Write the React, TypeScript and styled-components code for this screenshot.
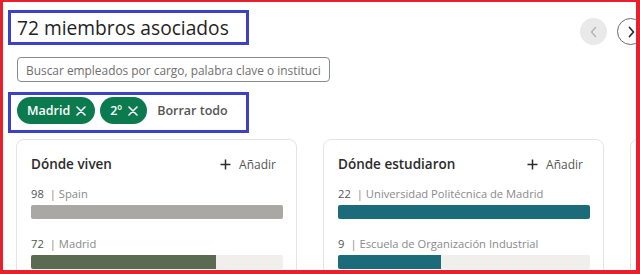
import styled, { createGlobalStyle } from "styled-components";

interface StatItem {
  count: number;
  name: string;
}

interface Insight {
  title: string;
  color: string;
  items: StatItem[];
}

const insights: Insight[] = [
  {
    title: "Dónde viven",
    color: "#5b6b51",
    items: [
      { count: 98, name: "Spain" },
      { count: 72, name: "Madrid" },
    ],
  },
  {
    title: "Dónde estudiaron",
    color: "#1c6b7a",
    items: [
      { count: 22, name: "Universidad Politécnica de Madrid" },
      { count: 9, name: "Escuela de Organización Industrial" },
    ],
  },
];

const GlobalStyle = createGlobalStyle`
  body {
    margin: 0;
    background: #fff;
    font-family: "Open Sans", "Noto Sans", sans-serif;
  }
`;

const Frame = styled.div`
  width: 640px;
  height: 274px;
  box-sizing: border-box;
  border-style: solid;
  border-color: #e8202b;
  border-width: 2px 4px 4px 3px;
  overflow: hidden;
  background: #fff;
`;

const Page = styled.div`
  width: 641px;
  box-sizing: border-box;
  padding: 8px 0 0 5px;
  display: flex;
  flex-direction: column;
  align-items: flex-start;
`;

const Header = styled.div`
  align-self: stretch;
  display: flex;
  justify-content: space-between;
  align-items: flex-start;
`;

const Marked = styled.div`
  width: 241px;
  box-sizing: border-box;
  border: 3px solid #3d41c6;
  padding-left: 6px;
  display: flex;
  align-items: center;
`;

const Title = styled.h1`
  margin: 0;
  font-size: 19.2px;
  font-weight: 400;
  line-height: 29px;
  color: #1f1f1f;
  white-space: nowrap;
`;

const Nav = styled.div`
  display: flex;
  gap: 10px;
  margin-top: 8px;
`;

const NavButton = styled.button<{ $enabled?: boolean }>`
  width: 27px;
  height: 27px;
  padding: 0;
  border-radius: 50%;
  display: flex;
  align-items: center;
  justify-content: center;
  box-sizing: border-box;
  background: ${(p) => (p.$enabled ? "#fff" : "#e9e9e9")};
  border: ${(p) => (p.$enabled ? "1px solid #6b6b6b" : "none")};
  color: ${(p) => (p.$enabled ? "#2b2b2b" : "#b0b0b0")};
`;

const Search = styled.input`
  margin: 12px 0 0 9px;
  width: 313px;
  height: 25px;
  box-sizing: border-box;
  border: 1px solid #8a8a8a;
  border-radius: 4px;
  padding: 0 8px;
  font-family: inherit;
  font-size: 11.9px;
  color: #333;
  &::placeholder {
    color: #6f6f6f;
  }
`;

const Filters = styled(Marked)`
  margin-top: 10px;
  height: 41px;
  padding: 2px 6px 6px;
  gap: 5px;
`;

const Chip = styled.button`
  height: 27px;
  padding: 0 9px 0 10px;
  border: none;
  border-radius: 14px;
  background: #0b7a4e;
  color: #fff;
  font-family: inherit;
  font-size: 12.5px;
  font-weight: 600;
  display: flex;
  align-items: center;
  gap: 6px;
`;

const ClearAll = styled.button`
  margin-left: 5px;
  padding: 0;
  border: none;
  background: none;
  font-family: inherit;
  font-size: 12.5px;
  font-weight: 600;
  color: #555;
  white-space: nowrap;
`;

const Cards = styled.div`
  margin: 6px 0 0 8px;
  display: flex;
  gap: 26px;
`;

const Card = styled.section`
  flex: none;
  width: 281px;
  height: 200px;
  box-sizing: border-box;
  border: 1px solid #e4e4e4;
  border-radius: 8px;
  padding: 14px 13px 0 14px;
`;

const CardHead = styled.div`
  height: 20px;
  display: flex;
  justify-content: space-between;
  align-items: center;
`;

const CardTitle = styled.h2`
  margin: 0;
  font-size: 13.5px;
  font-weight: 600;
  color: #2b2b2b;
`;

const AddButton = styled.button`
  display: flex;
  align-items: center;
  gap: 8px;
  padding: 0 7px 0 0;
  border: none;
  background: none;
  font-family: inherit;
  font-size: 12px;
  font-weight: 500;
  color: #555;
`;

const Stat = styled.div`
  margin-top: 10px;
  & + & {
    margin-top: 15px;
  }
`;

const StatLabel = styled.div`
  line-height: 20px;
  font-size: 11.2px;
  color: #8a8a8a;
  white-space: nowrap;
  span {
    color: #555;
    margin-right: 6px;
  }
`;

const Track = styled.div`
  margin-top: 1px;
  height: 14px;
  border-radius: 2px;
  background: #f0efeb;
  overflow: hidden;
`;

const Fill = styled.div<{ $color: string }>`
  height: 100%;
  background: ${(p) => p.$color};
`;

function Chevron({ left }: { left?: boolean }) {
  return (
    <svg width="10" height="12" viewBox="0 0 10 12" fill="none">
      <path
        d={left ? "M6.5 1.5 2.5 6l4 4.5" : "M3.5 1.5 7.5 6l-4 4.5"}
        stroke="currentColor"
        strokeWidth={left ? 1.2 : 1.7}
        strokeLinecap="round"
        strokeLinejoin="round"
      />
    </svg>
  );
}

function Cross() {
  return (
    <svg width="10" height="10" viewBox="0 0 10 10">
      <path d="M1 1l8 8M9 1 1 9" stroke="#fff" strokeWidth="1.6" strokeLinecap="round" />
    </svg>
  );
}

function Plus() {
  return (
    <svg width="11" height="11" viewBox="0 0 11 11">
      <path d="M5.5 0.5v10M0.5 5.5h10" stroke="#2b2b2b" strokeWidth="1.5" />
    </svg>
  );
}

function InsightCard({ insight }: { insight: Insight }) {
  const max = Math.max(...insight.items.map((i) => i.count));
  return (
    <Card>
      <CardHead>
        <CardTitle>{insight.title}</CardTitle>
        <AddButton>
          <Plus />
          Añadir
        </AddButton>
      </CardHead>
      {insight.items.map((item, i) => (
        <Stat key={item.name}>
          <StatLabel>
            <span>{item.count}</span>| {item.name}
          </StatLabel>
          <Track>
            <Fill
              $color={i === 0 && insight.title === "Dónde viven" ? "#a9a8a4" : insight.color}
              style={{ width: `${(item.count / max) * 100}%` }}
            />
          </Track>
        </Stat>
      ))}
    </Card>
  );
}

export default function App() {
  return (
    <>
      <GlobalStyle />
      <Frame>
        <Page>
          <Header>
            <Marked>
              <Title>72 miembros asociados</Title>
            </Marked>
            <Nav>
              <NavButton>
                <Chevron left />
              </NavButton>
              <NavButton $enabled>
                <Chevron />
              </NavButton>
            </Nav>
          </Header>
          <Search placeholder="Buscar empleados por cargo, palabra clave o institución educativa" />
          <Filters>
            <Chip>
              Madrid <Cross />
            </Chip>
            <Chip>
              2º <Cross />
            </Chip>
            <ClearAll>Borrar todo</ClearAll>
          </Filters>
          <Cards>
            {insights.map((ins) => (
              <InsightCard key={ins.title} insight={ins} />
            ))}
            <Card />
          </Cards>
        </Page>
      </Frame>
    </>
  );
}
